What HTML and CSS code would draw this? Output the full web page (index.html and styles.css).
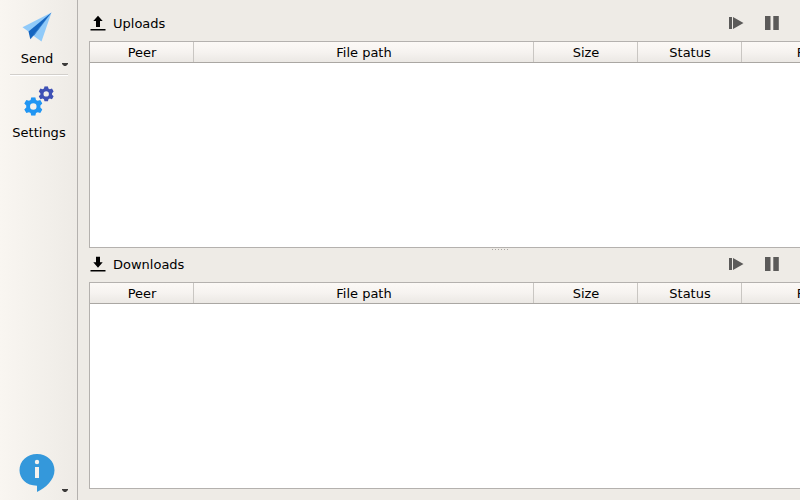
FILE: index.html
```html
<!DOCTYPE html>
<html lang="en">
<head>
<meta charset="utf-8">
<title>Transfers</title>
<link rel="stylesheet" href="styles.css">
</head>
<body>
<svg class="defs" width="0" height="0" aria-hidden="true">
  <symbol id="resume" viewBox="0 0 16 16"><path d="M1 2h3v12H1zM5 2l10.5 6L5 14z"/></symbol>
  <symbol id="pause" viewBox="0 0 16 16"><path d="M1 1h5.5v14H1zM9.3 1h5.5v14H9.3z"/></symbol>
  <symbol id="gear" viewBox="-10 -10 20 20"><path fill-rule="evenodd" d="M-2.200-9.900H2.200L2.900-7.100 4.700-6.100 7.500-6.900 9.700-3.100 7.600-1V1L9.700 3.100 7.500 6.900 4.700 6.100 2.900 7.100 2.200 9.900H-2.200L-2.900 7.100-4.700 6.100-7.500 6.900-9.700 3.100-7.600 1V-1L-9.700-3.100-7.500-6.900-4.700-6.100-2.900-7.100ZM0-3.500A3.500 3.500 0 1 0 0 3.500 3.500 3.500 0 1 0 0-3.500Z"/></symbol>
</svg>
<div class="window">
  <nav class="sidebar">
    <button class="tool send">
      <svg width="32" height="32" viewBox="21 11 32 32"><path fill="#90caf9" d="M51.500 12.500 22.500 27.300 28.800 31.800 34.800 36.800 41.500 41.500z"/><path fill="#1565c0" d="M51.500 12.500 28.500 31.500 30.300 39.300z"/><path fill="#1565c0" d="M51.500 12.500 30.300 39.300 35 34.300z"/></svg>
      <span>Send</span>
      <i class="arrow"></i>
    </button>
    <hr class="rule">
    <button class="tool settings">
      <svg width="32" height="32" viewBox="23 85 32 32"><use href="#gear" x="24" y="97.200" width="18.600" height="18.600" fill="#2196f3"/><use href="#gear" x="38.500" y="86.200" width="15.400" height="15.400" fill="#3f51b5"/></svg>
      <span>Settings</span>
    </button>
    <button class="tool about">
      <svg width="36" height="40" viewBox="19 453 36 40"><path fill="#3498db" d="M37 492V485.700C26 485.700 19.500 478.500 19.500 470.300 19.500 461 27 454 37 454S54.500 461 54.500 470.300C54.500 480 45.500 488 37 492z"/><circle cx="37" cy="462" r="2.200" fill="#f5f2ee"/><path fill="#f5f2ee" d="M35 467h4v11h-4z"/></svg>
      <i class="arrow"></i>
    </button>
  </nav>
  <main class="content">
    <section class="pane">
      <header class="bar">
        <svg width="16" height="16" viewBox="0 0 16 16"><path d="M8 .8 12.700 6H10v6H6V6H3.300zM.5 14h15v1.500H.5z"/></svg>
        <span>Uploads</span>
        <div class="actions"><svg width="16" height="16"><use href="#resume"/></svg><svg width="16" height="16"><use href="#pause"/></svg></div>
      </header>
      <div class="table"><div class="head"><span>Peer</span><span>File path</span><span>Size</span><span>Status</span><span>Progress</span></div></div>
    </section>
    <div class="splitter"><i></i><i></i><i></i><i></i><i></i><i></i></div>
    <section class="pane">
      <header class="bar">
        <svg width="16" height="16" viewBox="0 0 16 16"><path d="M6 .8h4V6.300H12.700L8 11.800 3.300 6.300H6zM.5 14h15v1.500H.5z"/></svg>
        <span>Downloads</span>
        <div class="actions"><svg width="16" height="16"><use href="#resume"/></svg><svg width="16" height="16"><use href="#pause"/></svg></div>
      </header>
      <div class="table"><div class="head"><span>Peer</span><span>File path</span><span>Size</span><span>Status</span><span>Progress</span></div></div>
    </section>
  </main>
</div>
</body>
</html>
```
FILE: styles.css
```css
* { box-sizing: border-box; }
body {
  margin: 0;
  background: #eeebe6;
  color: #000;
  font: 13px/16px "DejaVu Sans", sans-serif;
  overflow: hidden;
}
svg { display: block; flex: none; }
.defs { position: absolute; }
.window { display: flex; width: 800px; height: 500px; overflow: hidden; }
.sidebar {
  display: flex;
  flex-direction: column;
  flex: none;
  width: 78px;
  border-right: 1px solid #b4b1ae;
  background: linear-gradient(90deg, #f9f6f1, #eeebe6);
}
.tool {
  position: relative;
  display: flex;
  flex-direction: column;
  align-items: center;
  width: 78px;
  padding: 0 4px 0 0;
  border: 0;
  background: none;
  color: inherit;
  font: inherit;
}
.send { height: 74px; padding-top: 11px; gap: 8px; }
.settings { padding-top: 9px; gap: 8px; padding-right: 0; }
.about { margin-top: auto; height: 47px; }
.arrow {
  position: absolute;
  right: 10px;
  bottom: 8px;
  width: 6px;
  height: 3px;
  background: #3c3b3a;
  clip-path: polygon(0 0, 100% 0, 100% 34%, 67% 100%, 33% 100%, 0 34%);
}
.rule {
  width: 58px;
  height: 2px;
  margin: 0 0 0 10px;
  border: 0;
  border-top: 1px solid #d2cfcb;
  background: #fff;
}
.content { flex: none; width: 832px; padding-left: 11px; }
.pane { display: flex; flex-direction: column; height: 248px; }
.splitter + .pane { height: 241px; }
.splitter + .pane .bar { height: 34px; padding-top: 8px; }
.bar { display: flex; gap: 7px; height: 41px; padding: 15px 0 0 1px; flex: none; }
.bar span { line-height: 18px; }
.actions { display: flex; gap: 20px; margin-left: auto; padding-right: 130px; fill: #5b5a59; }
.table {
  flex: 1;
  width: 832px;
  border: 1px solid #b4b1ae;
  background: #fff;
}
.head {
  display: flex;
  height: 21px;
  border-bottom: 1px solid #aaa7a3;
  background: linear-gradient(#fcf9f6, #f6f3f0 50%, #ebe8e4);
  line-height: 21px;
  text-align: center;
}
.head span { flex: none; width: 104px; padding-left: 1px; border-right: 1px solid #c9c6c2; }
.head span:nth-child(2) { width: 340px; }
.head span:nth-child(5) { width: 165px; }
.splitter { display: flex; justify-content: center; gap: 2px; height: 0; padding-top: 1px; margin-bottom: -1px; }
.splitter i { width: 1px; height: 1px; background: #aaa7a3; }
```
